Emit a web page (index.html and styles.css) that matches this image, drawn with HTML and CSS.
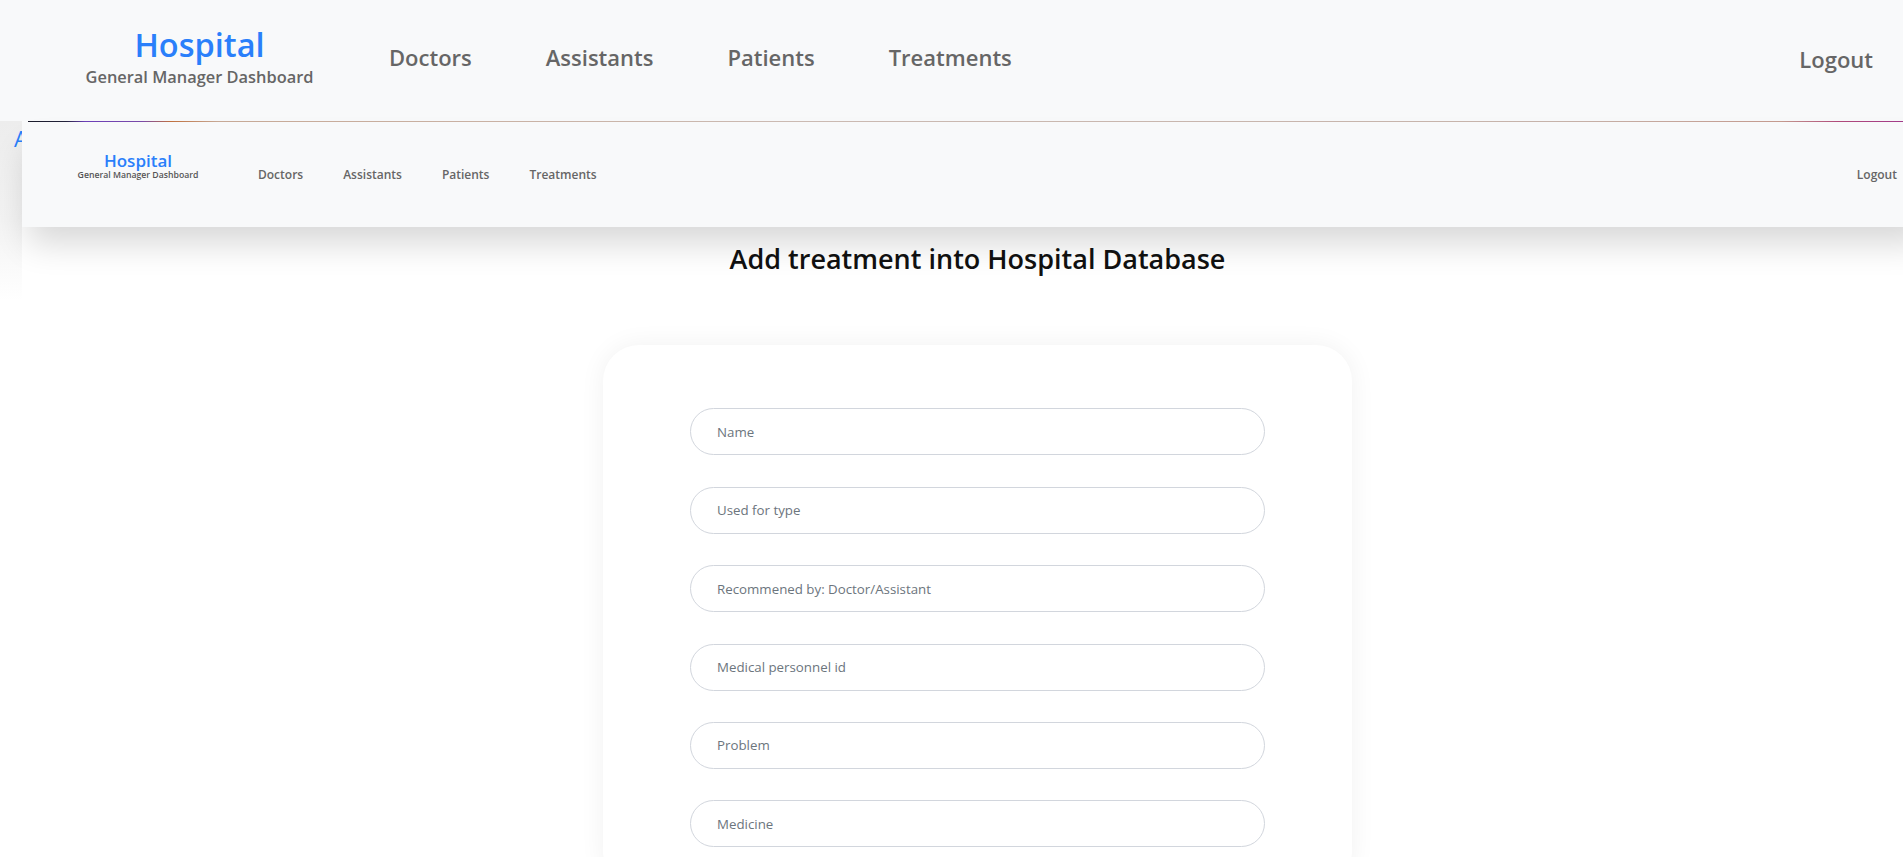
FILE: index.html
```html
<!DOCTYPE html>
<html lang="en">
<head>
<meta charset="utf-8">
<title>Hospital - Add treatment</title>
<link rel="stylesheet" href="styles.css">
</head>
<body>
<header class="topnav">
  <div class="brand">
    <div class="brand-title">Hospital</div>
    <div class="brand-sub">General Manager Dashboard</div>
  </div>
  <nav class="links">
    <a class="link" href="#">Doctors</a>
    <a class="link" href="#">Assistants</a>
    <a class="link" href="#">Patients</a>
    <a class="link" href="#">Treatments</a>
  </nav>
  <a class="logout" href="#">Logout</a>
</header>

<div class="stage">
  <div class="strip"><span class="strip-letter">A</span></div>
  <div class="frame">
    <header class="innernav">
      <div class="ibrand">
        <div class="ibrand-title">Hospital</div>
        <div class="ibrand-sub">General Manager Dashboard</div>
      </div>
      <nav class="ilinks">
        <a class="ilink" href="#">Doctors</a>
        <a class="ilink" href="#">Assistants</a>
        <a class="ilink" href="#">Patients</a>
        <a class="ilink" href="#">Treatments</a>
      </nav>
      <a class="ilogout" href="#">Logout</a>
    </header>

    <main class="content">
      <h1 class="title">Add treatment into Hospital Database</h1>
      <form class="card">
        <input class="field" type="text" placeholder="Name">
        <input class="field" type="text" placeholder="Used for type">
        <input class="field" type="text" placeholder="Recommened by: Doctor/Assistant">
        <input class="field" type="text" placeholder="Medical personnel id">
        <input class="field" type="text" placeholder="Problem">
        <input class="field" type="text" placeholder="Medicine">
      </form>
    </main>
  </div>
</div>
</body>
</html>
```

FILE: styles.css
```css
html, body {
  margin: 0;
  padding: 0;
  height: 857px;
  overflow: hidden;
  background: #ffffff;
  font-family: "Open Sans", "Noto Sans", sans-serif;
}

a { text-decoration: none; }

/* ---------- top navbar ---------- */
.topnav {
  height: 121px;
  box-sizing: border-box;
  background: #f8f9fa;
  display: flex;
  align-items: flex-start;
  padding: 0 30px 0 84px;
}

.brand {
  width: 231px;
  text-align: center;
  padding-top: 24px;
  white-space: nowrap;
}

.brand-title {
  font-size: 32.5px;
  line-height: 42px;
  font-weight: 600;
  color: #2a7ffa;
}

.brand-sub {
  margin-top: 1px;
  font-size: 16.4px;
  line-height: 20px;
  font-weight: 600;
  color: #666;
}

.links {
  display: flex;
  gap: 74px;
  margin-left: 74px;
  padding-top: 42px;
}

.link, .logout {
  font-size: 22px;
  line-height: 31.5px;
  font-weight: 600;
  color: #666;
}

.logout {
  margin-left: auto;
  padding-top: 43.5px;
}

/* ---------- lower stage ---------- */
.stage {
  display: flex;
  align-items: flex-start;
}

.strip {
  width: 22px;
  flex: none;
  height: 180px;
  overflow: hidden;
  background: linear-gradient(#ededed, #f3f3f3 55%, #ffffff);
}

.strip-letter {
  display: block;
  padding: 2px 0 0 14px;
  font-size: 22px;
  line-height: 30px;
  color: #2a7ffa;
}

.frame {
  width: 1911px;
  flex: none;
}

.innernav {
  position: relative;
  z-index: 2;
  height: 106px;
  box-sizing: border-box;
  background-color: #f8f9fa;
  background-image: linear-gradient(90deg, #1b1b2b 0%, #22223a 2%, #6b3fb8 3%, #7a4aa8 6%, #c0703e 7.5%, #c7a996 10%, #cbbab2 40%, #c6b3aa 80%, #c49a8e 92%, #b04a7a 95%, #9c3490 100%);
  background-repeat: no-repeat;
  background-position: 6px 0;
  background-size: calc(100% - 6px) 1px;
  box-shadow: 0 22px 34px -6px rgba(0, 0, 0, 0.16);
  display: flex;
  align-items: flex-start;
  padding: 0 36px 0 54px;
}

.ibrand {
  width: 124px;
  text-align: center;
  padding-top: 31px;
  white-space: nowrap;
}

.ibrand-title {
  font-size: 17px;
  line-height: 18px;
  font-weight: 600;
  color: #2a7ffa;
}

.ibrand-sub {
  font-size: 8.7px;
  line-height: 10px;
  font-weight: 600;
  color: #555;
}

.ilinks {
  display: flex;
  gap: 40px;
  margin-left: 58px;
  padding-top: 45.5px;
}

.ilink, .ilogout {
  font-size: 12px;
  line-height: 16px;
  font-weight: 600;
  color: #666;
}

.ilogout {
  margin-left: auto;
  padding-top: 45.5px;
}

/* ---------- content ---------- */
.content {
  display: flex;
  flex-direction: column;
  align-items: center;
}

.title {
  margin: 16px 0 0;
  font-size: 27px;
  line-height: 32.4px;
  font-weight: 600;
  color: #111;
}

.card {
  margin-top: 70px;
  width: 749px;
  box-sizing: border-box;
  padding: 63px 87px 40px;
  background: #ffffff;
  border-radius: 36px;
  box-shadow: 0 0 26px rgba(0, 0, 0, 0.06);
  display: flex;
  flex-direction: column;
  gap: 31.4px;
}

.field {
  display: block;
  width: 575px;
  height: 47px;
  box-sizing: border-box;
  margin: 0;
  padding: 0 26px;
  border: 1px solid #d2d6dd;
  border-radius: 24px;
  background: #fff;
  font-family: "Open Sans", "Noto Sans", sans-serif;
  font-size: 13.3px;
  color: #333;
  outline: none;
}

.field::placeholder {
  color: #6c757d;
  opacity: 1;
}
```
